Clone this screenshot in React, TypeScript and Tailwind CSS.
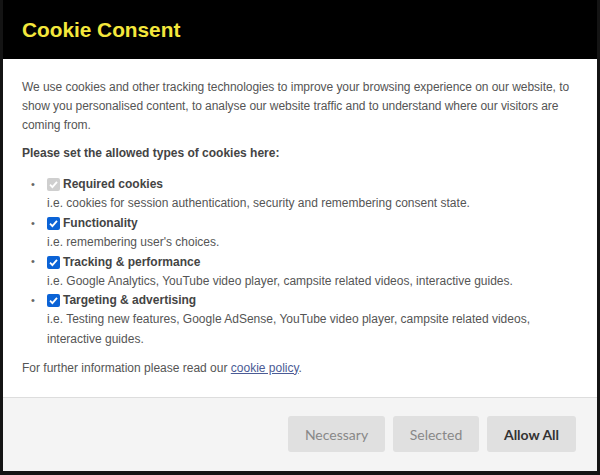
import React from "react";

const items = [
  { label: "Required cookies", desc: "i.e. cookies for session authentication, security and remembering consent state.", disabled: true },
  { label: "Functionality", desc: "i.e. remembering user's choices." },
  { label: "Tracking & performance", desc: "i.e. Google Analytics, YouTube video player, campsite related videos, interactive guides." },
  { label: "Targeting & advertising", desc: "i.e. Testing new features, Google AdSense, YouTube video player, campsite related videos, interactive guides." },
];

function Check({ disabled }: { disabled?: boolean }) {
  return (
    <span
      className={`inline-flex w-[13px] h-[13px] rounded-[2px] items-center justify-center shrink-0 ${disabled ? "bg-[#cfcfcf]" : "bg-[#0b63d6]"}`}
    >
      <svg width="11" height="11" viewBox="0 0 12 12">
        <path d="M2.2 6.2 L4.8 8.8 L9.8 3.2" fill="none" stroke="#fff" strokeWidth="2" />
      </svg>
    </span>
  );
}

export default function App() {
  return (
    <div className="w-[600px] h-[475px] bg-[#141414] overflow-hidden flex flex-col px-[3px]" style={{ fontFamily: '"Liberation Sans", Arial, sans-serif' }}>
      <div className="flex flex-col w-full">
        <div className="h-[59px] bg-black flex items-center px-[19px]">
          <h1 className="text-[20.8px] font-bold text-[#f4e73c] leading-none pt-[1px]">Cookie Consent</h1>
        </div>
        <div className="bg-white px-[19px] pt-[19px] pb-[19px] text-[12px] leading-[18.8px] text-[#555]">
          <p className="tracking-[-0.05px]">
            We use cookies and other tracking technologies to improve your browsing experience on our website, to show you personalised content, to analyse our website traffic and to understand where our visitors are coming from.
          </p>
          <p className="font-bold text-[#444] mt-[10px]">Please set the allowed types of cookies here:</p>
          <ul className="mt-[12px] pl-[9px]">
            {items.map((it) => (
              <li key={it.label} className="flex">
                <span className="w-[16px] shrink-0 text-[#666] text-[11px]">•</span>
                <div>
                  <div className="flex items-center gap-[3px] h-[19.3px]">
                    <Check disabled={it.disabled} />
                    <span className="font-bold text-[#444]">{it.label}</span>
                  </div>
                  <div className="leading-[19.3px]">{it.desc}</div>
                </div>
              </li>
            ))}
          </ul>
          <p className="mt-[10px]">
            For further information please read our{" "}
            <a className="underline text-[#4b5b95]" href="#">cookie policy</a>.
          </p>
        </div>
        <div className="bg-[#f4f4f4] border-t border-[#dddddd] h-[74px] flex items-center justify-end gap-[8px] pr-[21px]" style={{ fontFamily: 'Lato, "Liberation Sans", sans-serif' }}>
          <button className="w-[97px] h-[36px] rounded-[3px] bg-[#e0e0e0] text-[#888] text-[14px]">Necessary</button>
          <button className="w-[86px] h-[36px] rounded-[3px] bg-[#e0e0e0] text-[#888] text-[14px]">Selected</button>
          <button className="w-[89px] h-[36px] rounded-[3px] bg-[#e0e0e0] text-[#333] font-bold text-[14px]">Allow All</button>
        </div>
      </div>
    </div>
  );
}
